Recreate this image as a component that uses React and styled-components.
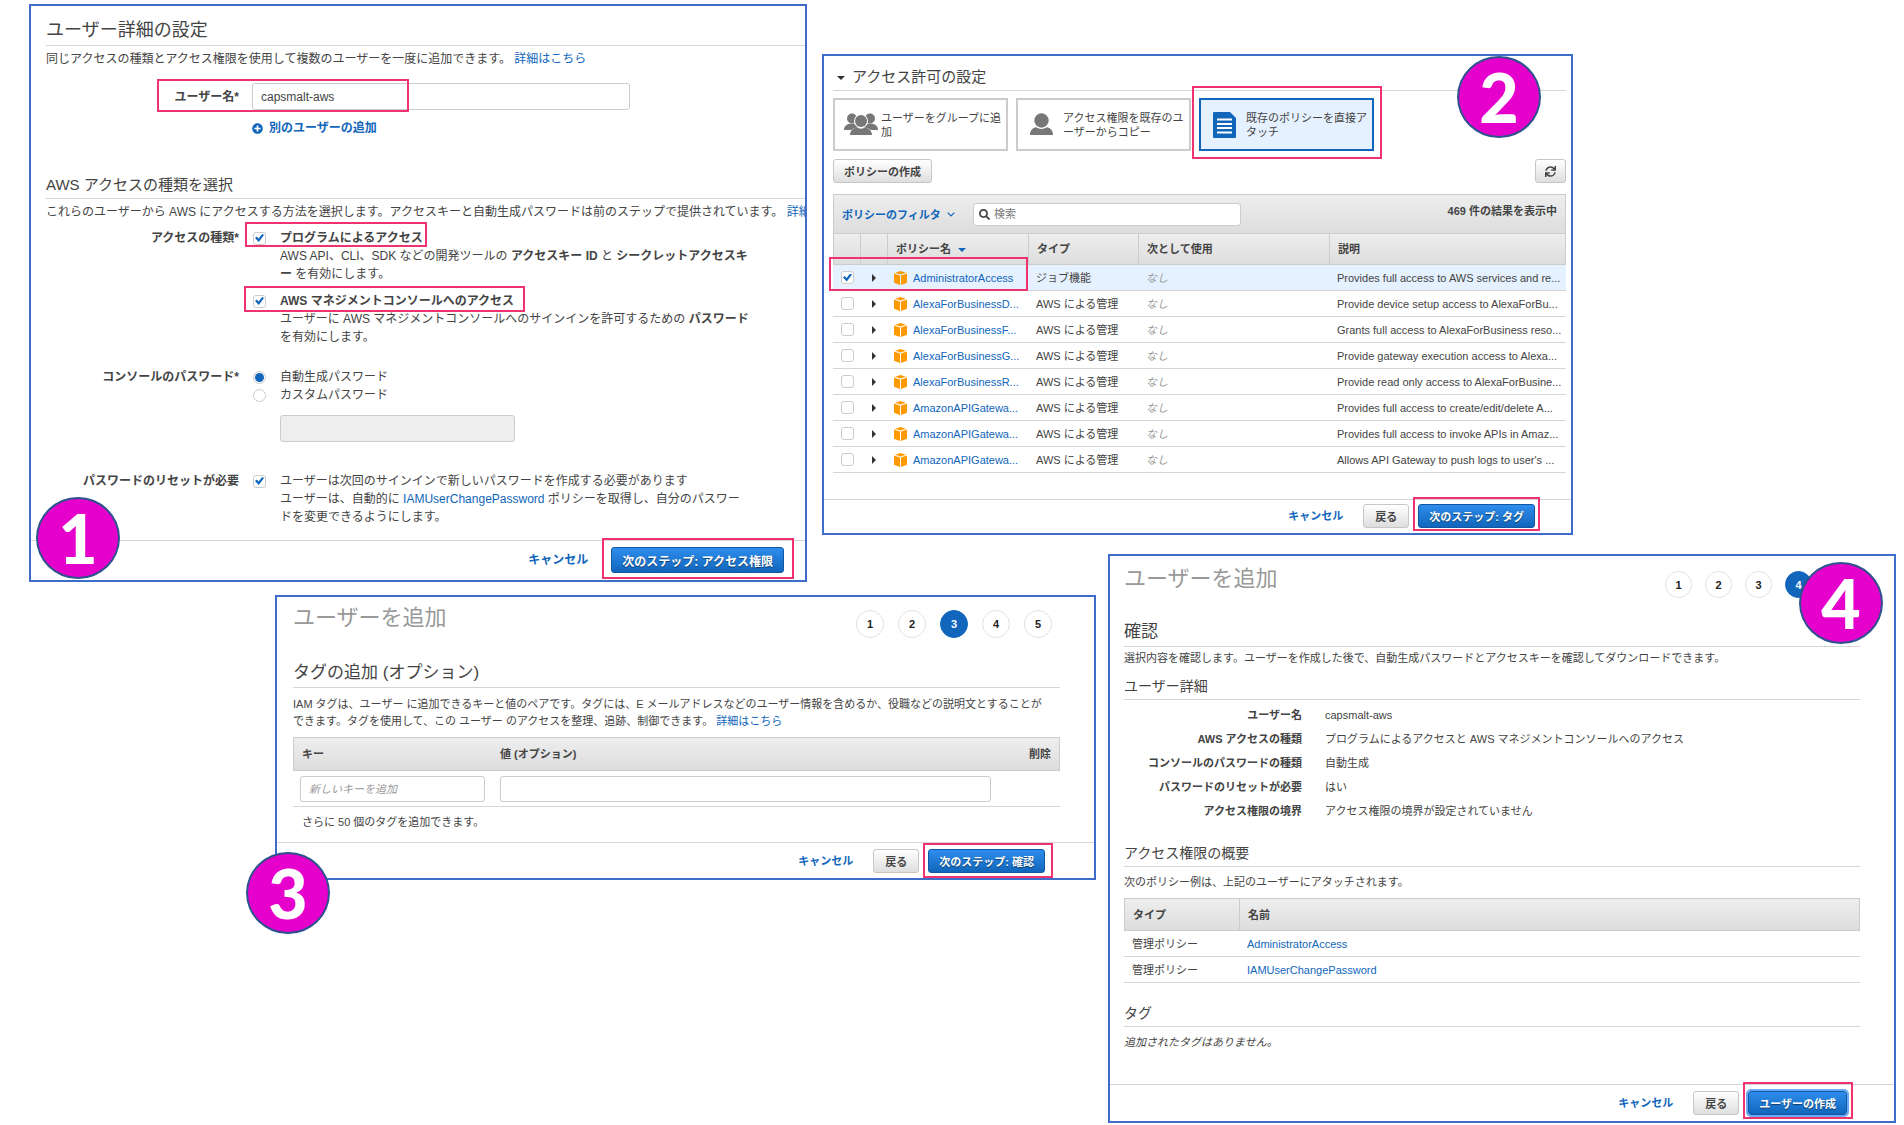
import React from "react";
import styled, { createGlobalStyle, css } from "styled-components";
import { FaPlusCircle, FaSearch, FaSync } from "react-icons/fa";

const color = {
  text: "#444444",
  link: "#1166bb",
  rule: "#d5d5d5",
  border: "#cccccc",
  frame: "#f0326e",
  panel: "#3d6dc9",
  badge: "#e600cc",
  selected: "#e5f1fe",
};

const GlobalStyle = createGlobalStyle`
  * { box-sizing: border-box; }
  body {
    margin: 0;
    background: #ffffff;
    color: ${color.text};
    font-family: "Liberation Sans", "Noto Sans CJK JP", sans-serif;
    font-size: 12px;
    line-height: 18px;
  }
  h1, h2, h3, p, dl, dd, ol { margin: 0; padding: 0; }
  button, input { font-family: inherit; }
`;

/* ---------- board and panels ---------- */

const Board = styled.main`
  display: grid;
  grid-template-columns:
    minmax(0, 246fr) minmax(0, 532fr) minmax(0, 15fr) minmax(0, 274fr)
    minmax(0, 12fr) minmax(0, 465fr) minmax(0, 323fr);
  grid-template-rows: auto auto 1fr;
  padding: 4px 8px 0 29px;
`;

const Panel = styled.section`
  position: relative;
  align-self: start;
  grid-column: ${(p) => p.$columns};
  grid-row: ${(p) => p.$rows};
  margin: ${(p) => p.$margin || "0"};
  border: 2px solid ${color.panel};
  background: #ffffff;
  font-size: ${(p) => p.$size}px;
`;

const Body = styled.div`
  padding: ${(p) => p.$pad};
`;

const Badge = styled.div`
  position: absolute;
  z-index: 3;
  top: ${(p) => p.$top};
  right: ${(p) => p.$right};
  bottom: ${(p) => p.$bottom};
  left: ${(p) => p.$left};
  display: flex;
  align-items: center;
  justify-content: center;
  width: 84px;
  height: 82px;
  border: 2px solid #2f528f;
  border-radius: 50%;
  background: ${color.badge};
  color: #ffffff;
  font: 900 68px/76px Lato, "Open Sans", sans-serif;
`;

const Frame = styled.span`
  position: absolute;
  z-index: 2;
  inset: ${(p) => p.$inset};
  width: ${(p) => p.$width || "auto"};
  border: 2px solid ${color.frame};
  pointer-events: none;
`;

const Anchor = styled.span`
  position: relative;
  display: inline-flex;
`;

/* ---------- text ---------- */

const Title = styled.h1`
  color: #999999;
  font-size: 22px;
  font-weight: 400;
  line-height: 28px;
`;

const Heading = styled.h2`
  margin-top: ${(p) => p.$top || 0}px;
  padding-bottom: 3px;
  border-bottom: 1px solid ${color.rule};
  font-size: ${(p) => p.$size}px;
  font-weight: 400;
  line-height: ${(p) => p.$line}px;
`;

const SubHeading = styled.h3`
  margin-top: ${(p) => p.$top}px;
  padding-bottom: 4px;
  border-bottom: 1px solid ${color.rule};
  font-size: 14px;
  font-weight: 400;
  line-height: 18px;
`;

const Text = styled.p`
  margin-top: ${(p) => p.$top || 0}px;
  padding: ${(p) => p.$pad || "0"};
  line-height: ${(p) => p.$line || 18}px;
  line-break: loose;
  ${(p) => p.$nowrap && css`white-space: nowrap; overflow: hidden;`}
  ${(p) => p.$italic && css`font-style: italic;`}
`;

const Link = styled.a`
  color: ${color.link};
  text-decoration: none;
`;

/* ---------- controls ---------- */

const buttonBase = css`
  display: inline-flex;
  align-items: center;
  justify-content: center;
  height: ${(p) => p.$height || 24}px;
  border-radius: 3px;
  font-size: inherit;
  font-weight: 700;
  white-space: nowrap;
`;

const Button = styled.button`
  ${buttonBase}
  padding: 0 ${(p) => p.$pad || 11}px;
  border: 1px solid #c6c6c6;
  background: linear-gradient(#ffffff, #dedede);
  color: ${color.text};
`;

const Primary = styled.button`
  ${buttonBase}
  padding: 0 10px;
  border: 1px solid #1058a4;
  background: linear-gradient(#2e8ded, #1166bb);
  color: #ffffff;
  text-shadow: 0 1px 1px rgba(0, 0, 0, 0.5);
  ${(p) => p.$focused && css`box-shadow: 0 0 0 2px #6aaaf6;`}
`;

const Footer = styled.footer`
  display: flex;
  align-items: center;
  justify-content: flex-end;
  margin-top: ${(p) => p.$top}px;
  padding: ${(p) => p.$pad};
  border-top: 1px solid ${color.rule};
`;

const Cancel = styled.a`
  margin-right: ${(p) => p.$gap || 20}px;
  color: ${color.link};
  font-weight: 700;
  text-decoration: none;
`;

const FooterButtons = styled.div`
  display: flex;
  gap: 9px;
`;

const Field = styled.input`
  width: ${(p) => p.$width || "100%"};
  height: ${(p) => p.$height || 27}px;
  padding: 0 8px;
  border: 1px solid ${color.border};
  border-radius: 3px;
  background: #ffffff;
  color: ${color.text};
  font-size: inherit;
  &:disabled { background: #eeeeee; }
  &::placeholder { color: #999999; font-style: italic; }
`;

const Checkbox = styled.input`
  appearance: none;
  flex: none;
  display: grid;
  place-items: center;
  width: 13px;
  height: 13px;
  margin: 0;
  border: 1px solid ${color.border};
  border-radius: 3px;
  background: #ffffff;
  &:checked::before {
    content: "";
    width: 9px;
    height: 8px;
    background: ${color.link};
    clip-path: polygon(0 50%, 20% 32%, 40% 56%, 80% 0, 100% 14%, 42% 100%);
  }
`;

const Radio = styled.input`
  appearance: none;
  flex: none;
  display: grid;
  place-items: center;
  width: 13px;
  height: 13px;
  margin: 0;
  border: 1px solid ${color.border};
  border-radius: 50%;
  background: #ffffff;
  &:checked::before {
    content: "";
    width: 9px;
    height: 9px;
    border-radius: 50%;
    background: ${color.link};
  }
`;

/* ---------- form rows ---------- */

const FormRow = styled.div`
  position: relative;
  display: grid;
  grid-template-columns: 193px minmax(0, 1fr);
  column-gap: 13px;
  margin-top: ${(p) => p.$top}px;
`;

const RowLabel = styled.label`
  align-self: ${(p) => (p.$center ? "center" : "start")};
  font-weight: 700;
  text-align: right;
`;

const Choices = styled.div`
  display: flex;
  flex-direction: column;
  align-items: flex-start;
  padding-left: 1px;
`;

const Choice = styled.label`
  position: relative;
  display: inline-flex;
  align-items: center;
  gap: 14px;
  margin-top: ${(p) => p.$top || 0}px;
  font-weight: ${(p) => (p.$bold ? 700 : 400)};
`;

const Note = styled.p`
  max-width: 497px;
  padding-left: 27px;
  line-break: loose;
`;

const Indent = styled.div`
  padding: 11px 0 0 27px;
`;

const AddLink = styled.a`
  display: inline-flex;
  align-items: center;
  gap: 6px;
  color: ${color.link};
  font-weight: 700;
  text-decoration: none;
`;

/* ---------- stepper ---------- */

const PanelHead = styled.header`
  display: flex;
  align-items: flex-start;
  justify-content: space-between;
`;

const StepList = styled.ol`
  display: flex;
  gap: ${(p) => p.$size - 14}px;
  padding: 6px 8px 0 0;
  list-style: none;
`;

const StepDot = styled.li`
  display: grid;
  place-items: center;
  width: ${(p) => p.$size}px;
  height: ${(p) => p.$size}px;
  border: 1px solid ${(p) => (p.$on ? color.link : "#e2e2e2")};
  border-radius: 50%;
  background: ${(p) => (p.$on ? color.link : "#ffffff")};
  color: ${(p) => (p.$on ? "#ffffff" : "#222222")};
  font-size: 11px;
  font-weight: 700;
  line-height: 14px;
`;

function Stepper({ current, size }) {
  return (
    <StepList $size={size}>
      {[1, 2, 3, 4, 5].map((n) => (
        <StepDot key={n} $on={n === current} $size={size}>
          {n}
        </StepDot>
      ))}
    </StepList>
  );
}

/* ---------- tables ---------- */

const Table = styled.table`
  width: 100%;
  margin-top: ${(p) => p.$top || 0}px;
  border-spacing: 0;
  table-layout: fixed;
  line-height: 18px;
`;

const HeadCell = styled.th`
  height: ${(p) => p.$height}px;
  padding: 0 8px;
  border: 0 solid ${color.border};
  border-width: 1px 0;
  background: linear-gradient(#eeeeee, #dddddd);
  font-weight: 700;
  text-align: ${(p) => p.$align || "left"};
  white-space: nowrap;
  &:first-child { border-left-width: 1px; }
  &:last-child { border-right-width: 1px; }
  ${(p) => p.$split && css`border-left-width: 1px;`}
`;

const Cell = styled.td`
  position: relative;
  height: ${(p) => p.$height || 26}px;
  padding: ${(p) => p.$pad || "0 8px"};
  border-bottom: 1px solid ${color.rule};
  background: ${(p) => (p.$selected ? color.selected : "transparent")};
  color: ${(p) => (p.$muted ? "#999999" : "inherit")};
  font-style: ${(p) => (p.$muted ? "italic" : "normal")};
  white-space: nowrap;
`;

const PolicyName = styled.span`
  display: flex;
  align-items: center;
  gap: 6px;
`;

const SortMark = styled.span`
  display: inline-block;
  margin-left: 7px;
  border: 4px solid transparent;
  border-top-color: ${color.link};
  border-bottom-width: 0;
  vertical-align: middle;
`;

const ExpandButton = styled.button`
  display: block;
  margin: 0 auto;
  padding: 0;
  border: 4px solid transparent;
  border-left-color: #333333;
  border-right-width: 0;
  background: none;
`;

/* ---------- permissions panel ---------- */

const SectionToggle = styled.span`
  display: inline-block;
  margin: 0 7px 0 4px;
  border: 4px solid transparent;
  border-top-color: #333333;
  border-bottom-width: 0;
  vertical-align: middle;
`;

const Cards = styled.div`
  display: grid;
  grid-template-columns: repeat(3, minmax(0, 175fr)) minmax(0, 184fr);
  column-gap: 8px;
  margin-top: 7px;
`;

const Card = styled.button`
  position: relative;
  display: flex;
  align-items: center;
  gap: ${(p) => p.$gap}px;
  height: 53px;
  padding: 0 2px 0 ${(p) => p.$left}px;
  border: 2px solid ${(p) => (p.$on ? color.link : color.border)};
  background: ${(p) => (p.$on ? color.selected : "#ffffff")};
  color: ${color.text};
  font-size: 11px;
  line-height: 14px;
  line-break: loose;
  text-align: left;
  & > svg { flex: none; }
`;

const CardText = styled.span`
  width: 124px;
`;

const Toolbar = styled.div`
  display: flex;
  justify-content: space-between;
  margin: 8px 0 11px;
`;

const FilterBar = styled.div`
  display: flex;
  align-items: center;
  height: 39px;
  padding: 0 8px;
  border: 1px solid ${color.border};
  border-bottom: 0;
  background: linear-gradient(#eeeeee, #dddddd);
`;

const FilterButton = styled.button`
  display: inline-flex;
  align-items: center;
  gap: 6px;
  width: 131px;
  padding: 0;
  border: 0;
  background: none;
  color: ${color.link};
  font-size: 11px;
  font-weight: 700;
  white-space: nowrap;
`;

const SearchBox = styled.label`
  display: flex;
  align-items: center;
  gap: 4px;
  width: 268px;
  height: 23px;
  padding: 0 5px;
  border: 1px solid ${color.border};
  border-radius: 3px;
  background: #ffffff;
`;

const SearchInput = styled.input`
  flex: 1;
  min-width: 0;
  padding: 0;
  border: 0;
  outline: 0;
  background: none;
  font-size: 11px;
  &::placeholder { color: #777777; }
`;

const ResultCount = styled.span`
  margin-left: auto;
  padding-bottom: 6px;
  font-weight: 700;
`;

/* ---------- summary list ---------- */

const Summary = styled.dl`
  display: grid;
  grid-template-columns: 178px minmax(0, 1fr);
  grid-auto-rows: 24px;
  column-gap: 23px;
  align-items: center;
  margin-top: 3px;
`;

const Term = styled.dt`
  font-weight: 700;
  text-align: right;
`;

/* ---------- icons ---------- */

const GroupIcon = () => (
  <svg width="34" height="23" viewBox="0 0 34 23" fill="#777777" aria-hidden="true">
    <circle cx="8" cy="5.5" r="5" />
    <circle cx="26" cy="5.5" r="5" />
    <path d="M0 17c0-4 3-6.500 8-6.500s8 2.500 8 6.500z" />
    <path d="M18 17c0-4 3-6.500 8-6.500s8 2.500 8 6.500z" />
    <circle cx="17" cy="8" r="7" fill="#fff" />
    <path d="M4.500 23c0-5.500 5-9 12.500-9s12.500 3.500 12.500 9z" fill="#fff" />
    <circle cx="17" cy="8" r="6" />
    <path d="M6 22c0-4.500 3.500-7 7.200-7.500 2 1.500 5.600 1.500 7.600 0 3.700.5 7.200 3 7.200 7.500z" />
  </svg>
);

const UserIcon = () => (
  <svg width="23" height="23" viewBox="0 0 23 23" fill="#777777" aria-hidden="true">
    <circle cx="11.500" cy="7.500" r="7.200" />
    <path d="M0 22c0-4.500 2.500-7 6.300-7.700 3 2.300 7.400 2.300 10.400 0C20.500 15 23 17.500 23 22z" />
  </svg>
);

const DocumentIcon = () => (
  <svg width="23" height="26" viewBox="0 0 23 26" aria-hidden="true">
    <path d="M1 0h16l6 6v19a1 1 0 0 1-1 1H1a1 1 0 0 1-1-1V1a1 1 0 0 1 1-1z" fill={color.link} />
    <path d="M4 7.500h15M4 12h15M4 16h15M4 20.500h15" stroke="#fff" strokeWidth="1.800" />
  </svg>
);

const CubeIcon = () => (
  <svg width="13" height="14" viewBox="0 0 13 14" fill="#ff9900" aria-hidden="true">
    <path d="M6.500 0 12 1.700 6.500 3.600 1 1.700z" />
    <path d="M0 2.500 6 4.600V14L0 11.800z" />
    <path d="M13 2.500 7 4.600V14l6-2.200z" />
  </svg>
);

const ChevronIcon = () => (
  <svg width="8" height="5" viewBox="0 0 8 5" aria-hidden="true">
    <path d="m.7.7 3.300 3.300L7.300.7" fill="none" stroke={color.link} strokeWidth="1.200" />
  </svg>
);

/* ---------- data ---------- */

const managed = "AWS による管理";
const policies = [
  ["AdministratorAccess", "ジョブ機能", "Provides full access to AWS services and re..."],
  ["AlexaForBusinessD...", managed, "Provide device setup access to AlexaForBu..."],
  ["AlexaForBusinessF...", managed, "Grants full access to AlexaForBusiness reso..."],
  ["AlexaForBusinessG...", managed, "Provide gateway execution access to Alexa..."],
  ["AlexaForBusinessR...", managed, "Provide read only access to AlexaForBusine..."],
  ["AmazonAPIGatewa...", managed, "Provides full access to create/edit/delete A..."],
  ["AmazonAPIGatewa...", managed, "Provides full access to invoke APIs in Amaz..."],
  ["AmazonAPIGatewa...", managed, "Allows API Gateway to push logs to user's ..."],
];

const summary = [
  ["ユーザー名", "capsmalt-aws"],
  ["AWS アクセスの種類", "プログラムによるアクセスと AWS マネジメントコンソールへのアクセス"],
  ["コンソールのパスワードの種類", "自動生成"],
  ["パスワードのリセットが必要", "はい"],
  ["アクセス権限の境界", "アクセス権限の境界が設定されていません"],
];

/* ---------- panels ---------- */

function UserDetailsPanel() {
  return (
    <Panel $columns="1 / 3" $rows="1 / 3" $margin="0 0 13px" $size={12}>
      <Body $pad="12px 0 0 15px">
        <Heading $size={18} $line={24}>ユーザー詳細の設定</Heading>
        <Text $top={4}>
          同じアクセスの種類とアクセス権限を使用して複数のユーザーを一度に追加できます。{" "}
          <Link href="#details">詳細はこちら</Link>
        </Text>
        <FormRow $top={15}>
          <RowLabel htmlFor="user-name" $center>ユーザー名*</RowLabel>
          <Field id="user-name" $width="378px" defaultValue="capsmalt-aws" />
          <Frame $inset="-4px auto -2px 111px" $width="252px" />
        </FormRow>
        <FormRow $top={9}>
          <span />
          <AddLink href="#add-user">
            <FaPlusCircle size={11} aria-hidden="true" />
            別のユーザーの追加
          </AddLink>
        </FormRow>

        <Heading $size={15} $line={20} $top={38}>AWS アクセスの種類を選択</Heading>
        <Text $top={4} $nowrap>
          これらのユーザーから AWS にアクセスする方法を選択します。アクセスキーと自動生成パスワードは前のステップで提供されています。{" "}
          <Link href="#access-details">詳細はこちら</Link>
        </Text>
        <FormRow $top={8}>
          <RowLabel as="span">アクセスの種類*</RowLabel>
          <Choices>
            <Choice $bold>
              <Checkbox type="checkbox" defaultChecked />
              プログラムによるアクセス
              <Frame $inset="-7px -4px 0 -8px" />
            </Choice>
            <Note>
              AWS API、CLI、SDK などの開発ツールの <b>アクセスキー ID</b> と{" "}
              <b>シークレットアクセスキー</b> を有効にします。
            </Note>
            <Choice $bold $top={9}>
              <Checkbox type="checkbox" defaultChecked />
              AWS マネジメントコンソールへのアクセス
              <Frame $inset="-6px -11px -2px -9px" />
            </Choice>
            <Note>
              ユーザーに AWS マネジメントコンソールへのサインインを許可するための{" "}
              <b>パスワード</b> を有効にします。
            </Note>
          </Choices>
        </FormRow>
        <FormRow $top={22}>
          <RowLabel as="span">コンソールのパスワード*</RowLabel>
          <Choices>
            <Choice>
              <Radio type="radio" name="password" defaultChecked />
              自動生成パスワード
            </Choice>
            <Choice>
              <Radio type="radio" name="password" />
              カスタムパスワード
            </Choice>
            <Indent>
              <Field $width="235px" aria-label="カスタムパスワード" disabled />
            </Indent>
          </Choices>
        </FormRow>
        <FormRow $top={30}>
          <RowLabel as="span">パスワードのリセットが必要</RowLabel>
          <Choices>
            <Choice>
              <Checkbox type="checkbox" defaultChecked />
              ユーザーは次回のサインインで新しいパスワードを作成する必要があります
            </Choice>
            <Note>
              ユーザーは、自動的に <Link href="#policy">IAMUserChangePassword</Link>{" "}
              ポリシーを取得し、自分のパスワードを変更できるようにします。
            </Note>
          </Choices>
        </FormRow>
      </Body>
      <Footer $top={14} $pad="6px 21px 7px 0">
        <Cancel href="#cancel" $gap={23}>キャンセル</Cancel>
        <Anchor>
          <Primary $height={26}>次のステップ: アクセス権限</Primary>
          <Frame $inset="-9px -10px -6px -9px" />
        </Anchor>
      </Footer>
      <Badge $left="5px" $bottom="1px">1</Badge>
    </Panel>
  );
}

function PermissionsPanel() {
  return (
    <Panel $columns="4 / 7" $rows="1" $margin="50px 0 19px" $size={11}>
      <Body $pad="11px 5px 0 9px">
        <Heading $size={15} $line={20}>
          <SectionToggle />
          アクセス許可の設定
        </Heading>
        <Cards>
          <Card $left={9} $gap={3}>
            <GroupIcon />
            <CardText>ユーザーをグループに追加</CardText>
          </Card>
          <Card $left={12} $gap={10}>
            <UserIcon />
            <CardText>アクセス権限を既存のユーザーからコピー</CardText>
          </Card>
          <Card $left={12} $gap={10} $on>
            <DocumentIcon />
            <CardText>既存のポリシーを直接アタッチ</CardText>
            <Frame $inset="-14px -10px -10px -9px" />
          </Card>
        </Cards>
        <Toolbar>
          <Button $pad={10}>ポリシーの作成</Button>
          <Button $pad={9} aria-label="更新">
            <FaSync size={11} aria-hidden="true" />
          </Button>
        </Toolbar>
        <FilterBar>
          <FilterButton>
            ポリシーのフィルタ
            <ChevronIcon />
          </FilterButton>
          <SearchBox>
            <FaSearch size={11} aria-hidden="true" />
            <SearchInput type="text" placeholder="検索" aria-label="検索" />
          </SearchBox>
          <ResultCount>469 件の結果を表示中</ResultCount>
        </FilterBar>
        <Table>
          <colgroup>
            <col style={{ width: 27 }} />
            <col style={{ width: 27 }} />
            <col style={{ width: 141 }} />
            <col style={{ width: 110 }} />
            <col style={{ width: 191 }} />
            <col />
          </colgroup>
          <thead>
            <tr>
              <HeadCell $height={32} $split />
              <HeadCell $height={32} $split />
              <HeadCell $height={32} $split>ポリシー名<SortMark /></HeadCell>
              <HeadCell $height={32} $split>タイプ</HeadCell>
              <HeadCell $height={32} $split>次として使用</HeadCell>
              <HeadCell $height={32} $split>説明</HeadCell>
            </tr>
          </thead>
          <tbody>
            {policies.map(([name, type, description], i) => (
              <tr key={i}>
                <Cell $selected={i === 0}>
                  <Checkbox type="checkbox" defaultChecked={i === 0} aria-label={name} />
                  {i === 0 && <Frame $inset="-8px auto -1px -4px" $width="199px" />}
                </Cell>
                <Cell $selected={i === 0}><ExpandButton aria-label="詳細" /></Cell>
                <Cell $selected={i === 0} $pad="0 0 0 7px">
                  <PolicyName>
                    <CubeIcon />
                    <Link href="#policy">{name}</Link>
                  </PolicyName>
                </Cell>
                <Cell $selected={i === 0}>{type}</Cell>
                <Cell $selected={i === 0} $muted>なし</Cell>
                <Cell $selected={i === 0}>{description}</Cell>
              </tr>
            ))}
          </tbody>
        </Table>
      </Body>
      <Footer $top={26} $pad="4px 36px 5px 0">
        <Cancel href="#cancel">キャンセル</Cancel>
        <FooterButtons>
          <Button>戻る</Button>
          <Anchor>
            <Primary>次のステップ: タグ</Primary>
            <Frame $inset="-7px -5px -3px -5px" />
          </Anchor>
        </FooterButtons>
      </Footer>
      <Badge $right="30px" $top="0">2</Badge>
    </Panel>
  );
}

function TagsPanel() {
  return (
    <Panel $columns="2 / 5" $rows="3" $size={11}>
      <Body $pad="7px 34px 0 16px">
        <PanelHead>
          <Title>ユーザーを追加</Title>
          <Stepper current={3} size={28} />
        </PanelHead>
        <Heading $size={17} $line={22} $top={24}>タグの追加 (オプション)</Heading>
        <Text $top={8} $line={17} $pad="0 8px 0 0">
          IAM タグは、ユーザー に追加できるキーと値のペアです。タグには、E メールアドレスなどのユーザー情報を含めるか、役職などの説明文とすることができます。タグを使用して、この ユーザー のアクセスを整理、追跡、制御できます。{" "}
          <Link href="#details">詳細はこちら</Link>
        </Text>
        <Table $top={7}>
          <colgroup>
            <col style={{ width: 199 }} />
            <col />
            <col style={{ width: 61 }} />
          </colgroup>
          <thead>
            <tr>
              <HeadCell $height={34}>キー</HeadCell>
              <HeadCell $height={34}>値 (オプション)</HeadCell>
              <HeadCell $height={34} $align="right">削除</HeadCell>
            </tr>
          </thead>
          <tbody>
            <tr>
              <Cell $height={36} $pad="0 7px">
                <Field $height={26} placeholder="新しいキーを追加" aria-label="キー" />
              </Cell>
              <Cell $height={36}>
                <Field $height={26} aria-label="値 (オプション)" />
              </Cell>
              <Cell $height={36} />
            </tr>
          </tbody>
        </Table>
        <Text $top={6} $pad="0 9px">さらに 50 個のタグを追加できます。</Text>
      </Body>
      <Footer $top={11} $pad="6px 49px 5px 0">
        <Cancel href="#cancel">キャンセル</Cancel>
        <FooterButtons>
          <Button>戻る</Button>
          <Anchor>
            <Primary>次のステップ: 確認</Primary>
            <Frame $inset="-6px -8px -5px -5px" />
          </Anchor>
        </FooterButtons>
      </Footer>
      <Badge $left="-31px" $bottom="-56px">3</Badge>
    </Panel>
  );
}

function ReviewPanel() {
  return (
    <Panel $columns="6 / 8" $rows="2 / 4" $size={11}>
      <Body $pad="9px 34px 0 14px">
        <PanelHead>
          <Title>ユーザーを追加</Title>
          <Stepper current={4} size={27} />
        </PanelHead>
        <Heading $size={17} $line={22} $top={23}>確認</Heading>
        <Text $top={3} $line={17}>
          選択内容を確認します。ユーザーを作成した後で、自動生成パスワードとアクセスキーを確認してダウンロードできます。
        </Text>
        <SubHeading $top={10}>ユーザー詳細</SubHeading>
        <Summary>
          {summary.map(([term, value]) => (
            <React.Fragment key={term}>
              <Term>{term}</Term>
              <dd>{value}</dd>
            </React.Fragment>
          ))}
        </Summary>
        <SubHeading $top={21}>アクセス権限の概要</SubHeading>
        <Text $top={7} $line={17}>次のポリシー例は、上記のユーザーにアタッチされます。</Text>
        <Table $top={7}>
          <colgroup>
            <col style={{ width: 115 }} />
            <col />
          </colgroup>
          <thead>
            <tr>
              <HeadCell $height={33} $split>タイプ</HeadCell>
              <HeadCell $height={33} $split>名前</HeadCell>
            </tr>
          </thead>
          <tbody>
            {["AdministratorAccess", "IAMUserChangePassword"].map((name) => (
              <tr key={name}>
                <Cell>管理ポリシー</Cell>
                <Cell><Link href="#policy">{name}</Link></Cell>
              </tr>
            ))}
          </tbody>
        </Table>
        <SubHeading $top={21}>タグ</SubHeading>
        <Text $top={7} $line={17} $italic>追加されたタグはありません。</Text>
      </Body>
      <Footer $top={33} $pad="6px 47px 6px 0">
        <Cancel href="#cancel">キャンセル</Cancel>
        <FooterButtons>
          <Button>戻る</Button>
          <Anchor>
            <Primary $focused>ユーザーの作成</Primary>
            <Frame $inset="-9px -6px -4px -5px" />
          </Anchor>
        </FooterButtons>
      </Footer>
      <Badge $right="11px" $top="6px">4</Badge>
    </Panel>
  );
}

export default function App() {
  return (
    <>
      <GlobalStyle />
      <Board lang="ja">
        <UserDetailsPanel />
        <PermissionsPanel />
        <TagsPanel />
        <ReviewPanel />
      </Board>
    </>
  );
}
